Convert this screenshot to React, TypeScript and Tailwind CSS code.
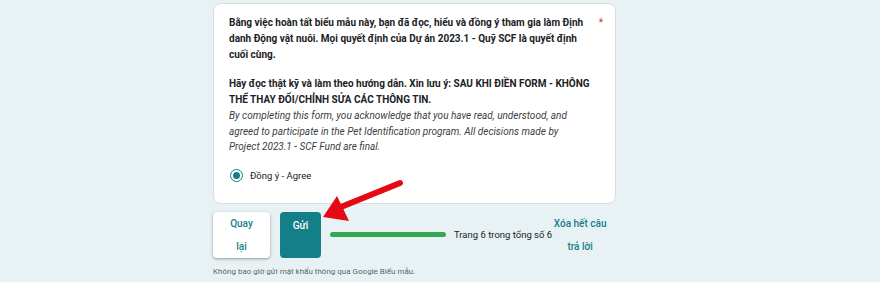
import React from 'react';

export default function App() {
  return (
    <div className="relative w-[880px] h-[282px] overflow-hidden bg-[#e8f2f4] font-['Roboto',sans-serif]">
      <div className="w-[403px] ml-[213px] pt-[3px]">
        {/* Question card */}
        <div className="bg-white border border-[#dadce0] rounded-[8px] pt-[11px] pb-[20px] pl-[15px] pr-[12px]">
          <div className="flex">
            <div className="w-[362px] text-[10px] leading-[16px] text-[#202124]">
              <p className="font-bold">
                Bằng việc hoàn tất biểu mẫu này, bạn đã đọc, hiểu và đồng ý tham gia làm Định danh Động vật nuôi. Mọi quyết định của Dự án 2023.1 - Quỹ SCF là quyết định cuối cùng.
              </p>
              <p className="font-bold mt-[13px]">
                Hãy đọc thật kỹ và làm theo hướng dẫn. Xin lưu ý: SAU KHI ĐIỀN FORM - KHÔNG THỂ THAY ĐỔI/CHỈNH SỬA CÁC THÔNG TIN.
              </p>
              <p className="italic text-[#3c4043] leading-[15.5px]">
                By completing this form, you acknowledge that you have read, understood, and agreed to participate in the Pet Identification program. All decisions made by Project 2023.1 - SCF Fund are final.
              </p>
            </div>
            <span className="ml-auto text-[#d93025] text-[10px] leading-[16px]">*</span>
          </div>
          {/* Radio option */}
          <div className="flex items-center gap-[7px] mt-[14px] ml-[1px]">
            <span className="w-[13px] h-[13px] rounded-full border-[1.5px] border-[#138089] flex items-center justify-center">
              <span className="w-[7px] h-[7px] rounded-full bg-[#138089]" />
            </span>
            <span className="text-[9.5px] text-[#202124]">Đồng ý - Agree</span>
          </div>
        </div>

        {/* Navigation row */}
        <div className="flex items-center mt-[8px]">
          <button className="flex-none w-[57px] h-[46px] bg-white rounded-[4px] shadow-[0_1px_2px_rgba(60,64,67,0.3),0_1px_3px_1px_rgba(60,64,67,0.15)] text-[#138089] text-[10px] font-medium leading-[23px] flex flex-col items-center justify-center">
            <span>Quay</span>
            <span>lại</span>
          </button>
          <button className="flex-none w-[41px] h-[46px] ml-[10px] bg-[#138089] rounded-[4px] text-white text-[10px] font-medium flex justify-center pt-[6px]">
            Gửi
          </button>
          <div className="flex-none w-[116px] h-[5px] ml-[9px] rounded-full bg-[#34a853]" />
          <span className="flex-none ml-[8px] whitespace-nowrap text-[9.5px] text-[#202124]">Trang 6 trong tổng số 6</span>
          <div className="flex-none ml-auto mr-[10px] w-[56px] text-center text-[10px] font-medium leading-[23px] text-[#138089]">
            Xóa hết câu trả lời
          </div>
        </div>

        <p className="mt-[8px] text-[8px] text-[#5f6368] whitespace-nowrap">Không bao giờ gửi mật khẩu thông qua Google Biểu mẫu.</p>
      </div>

      {/* Red annotation arrow */}
      <svg className="absolute left-0 top-0" width="880" height="282" viewBox="0 0 880 282">
        <line x1="400" y1="183" x2="336" y2="209" stroke="#e50914" strokeWidth="6" strokeLinecap="round" />
        <polygon points="323,217 337,196 349,221" fill="#e50914" />
      </svg>
    </div>
  );
}
